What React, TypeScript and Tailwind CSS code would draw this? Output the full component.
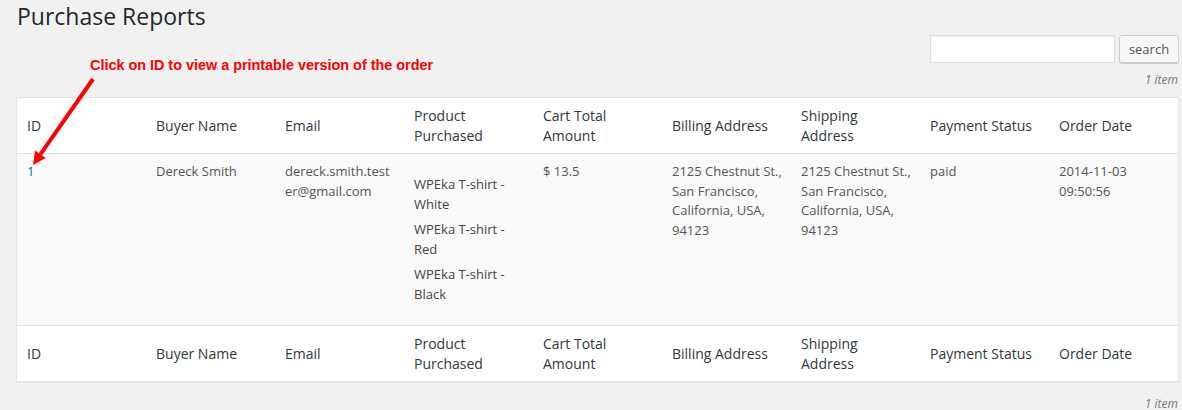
import React from 'react'

const columns = [
  'ID',
  'Buyer Name',
  'Email',
  'Product Purchased',
  'Cart Total Amount',
  'Billing Address',
  'Shipping Address',
  'Payment Status',
  'Order Date',
]

const products = ['WPEka T-shirt - White', 'WPEka T-shirt - Red', 'WPEka T-shirt - Black']

const address = ['2125 Chestnut St.,', 'San Francisco,', 'California, USA,', '94123']

function HeaderRow({ foot }: { foot?: boolean }) {
  return (
    <tr>
      {columns.map((c) => (
        <th
          key={c}
          className={
            foot
              ? 'border-t border-[#e1e1e1] px-[10px] py-[8px] text-left align-middle text-[14px] font-normal leading-[19.6px] text-[#32373c]'
              : 'border-b border-[#e1e1e1] px-[10px] py-[8px] text-left align-middle text-[14px] font-normal leading-[19.6px] text-[#32373c]'
          }
        >
          {c}
        </th>
      ))}
    </tr>
  )
}

export default function App() {
  return (
    <div className="relative min-h-screen bg-[#f1f1f1] pl-[16px] pr-[3px] pt-[2px] font-['Open_Sans',sans-serif]">
      <h1 className="pl-px text-[23px] font-normal leading-[29px] text-[#23282d]">Purchase Reports</h1>

      <div className="mt-[4px] flex justify-end gap-[4px]">
        <input
          type="search"
          className="h-[28px] w-[185px] border border-[#dddddd] bg-white px-2 text-[13px] shadow-[inset_0_1px_2px_rgba(0,0,0,0.07)] outline-none"
        />
        <button className="h-[28px] w-[60px] rounded-[3px] border border-[#cccccc] bg-[#f7f7f7] text-[13px] leading-[26px] text-[#555555] shadow-[0_1px_0_#cccccc]">
          search
        </button>
      </div>

      <div className="mt-[8px] pr-px text-right text-[12px] italic leading-[18px] text-[#777777]">1 item</div>

      <table className="mt-[8px] w-full table-fixed border-separate border-spacing-0 border border-[#e5e5e5] bg-white shadow-[0_1px_1px_rgba(0,0,0,0.04)]">
        <thead>
          <HeaderRow />
        </thead>
        <tbody>
          <tr className="bg-[#f9f9f9] text-[13px] leading-[19.5px] text-[#555555]">
            <td className="px-[10px] py-[8px] align-top">
              <a href="#" className="text-[#0073aa]">1</a>
            </td>
            <td className="px-[10px] py-[8px] align-top">Dereck Smith</td>
            <td className="px-[10px] py-[8px] align-top">
              <span className="block">dereck.smith.test</span>
              <span className="block">er@gmail.com</span>
            </td>
            <td className="px-[10px] py-[8px] align-top">
              <ul className="my-[13px] text-[#444444]">
                {products.map((p) => (
                  <li key={p} className="mb-[6px] last:mb-0">
                    {p}
                  </li>
                ))}
              </ul>
            </td>
            <td className="px-[10px] py-[8px] align-top">$ 13.5</td>
            <td className="px-[10px] py-[8px] align-top">
              {address.map((l) => (
                <span key={l} className="block whitespace-nowrap">
                  {l}
                </span>
              ))}
            </td>
            <td className="px-[10px] py-[8px] align-top">
              {address.map((l) => (
                <span key={l} className="block whitespace-nowrap">
                  {l}
                </span>
              ))}
            </td>
            <td className="px-[10px] py-[8px] align-top">paid</td>
            <td className="px-[10px] py-[8px] align-top">
              <span className="block">2014-11-03</span>
              <span className="block">09:50:56</span>
            </td>
          </tr>
        </tbody>
        <tfoot>
          <HeaderRow foot />
        </tfoot>
      </table>

      <div className="mt-[13px] pr-px text-right text-[12px] italic leading-[18px] text-[#777777]">1 item</div>

      {/* annotation over the screenshot */}
      <div className="absolute left-[90px] top-[57px] font-['Liberation_Sans',Arial,sans-serif] text-[14.4px] font-bold leading-[16px] text-[#ff0000]">
        Click on ID to view a printable version of the order
      </div>
      <svg className="pointer-events-none absolute left-0 top-0" width="120" height="180" viewBox="0 0 120 180">
        <line x1="93" y1="79" x2="40.4" y2="154.3" stroke="#ff0000" strokeWidth="4" />
        <polygon points="33,165 35.1,150.6 45.7,158" fill="#ff0000" />
      </svg>
    </div>
  )
}
